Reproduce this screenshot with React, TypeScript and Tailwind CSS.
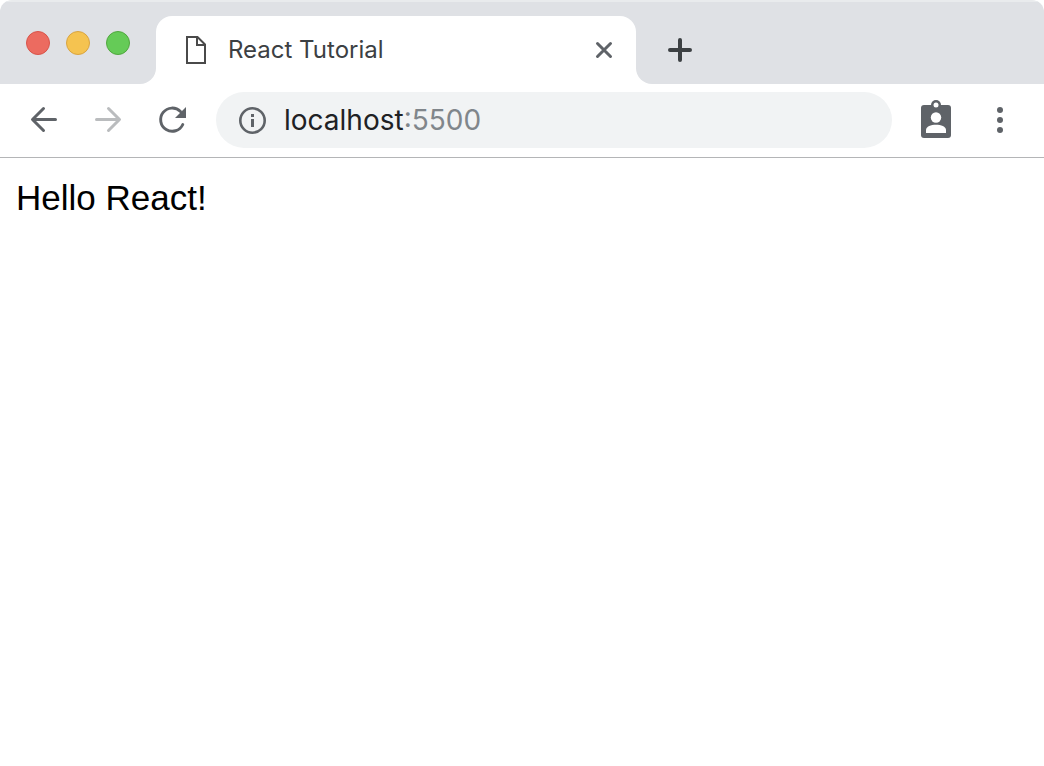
import { useState, type ReactNode } from 'react';

interface ToolbarButtonProps {
  label: string;
  disabled?: boolean;
  children: ReactNode;
}

function ToolbarButton({ label, disabled, children }: ToolbarButtonProps) {
  return (
    <button
      type="button"
      aria-label={label}
      disabled={disabled}
      className="flex h-14 w-14 shrink-0 items-center justify-center rounded-full text-[#5f6368] disabled:text-[#babcbe]"
    >
      {children}
    </button>
  );
}

function TrafficLights() {
  return (
    <div className="flex gap-4">
      <button type="button" aria-label="Close window" className="h-6 w-6 rounded-full border border-[#d8544a] bg-[#ec6b60]" />
      <button type="button" aria-label="Minimize window" className="h-6 w-6 rounded-full border border-[#d9a441] bg-[#f5c350]" />
      <button type="button" aria-label="Zoom window" className="h-6 w-6 rounded-full border border-[#51a73f] bg-[#65cb57]" />
    </div>
  );
}

function TabStrip() {
  return (
    <header className="flex h-21 overflow-hidden rounded-t-xl">
      <div className="flex w-39 shrink-0 items-center rounded-br-2xl border-t-2 border-[#e9ebed] bg-[#dfe1e5] pb-0 pl-6.5">
        <TrafficLights />
      </div>

      <div className="w-120 min-w-0 border-t-2 border-[#e9ebed] bg-[#dfe1e5] pt-3.5">
        <div className="flex h-full items-center rounded-t-2xl bg-white pr-4 pl-7">
          <svg width="24" height="32" viewBox="0 0 24 32" fill="none" stroke="#4a4a4a" strokeWidth="2" className="shrink-0" aria-hidden="true">
            <path d="M3 3h10.500l7.500 7.500V29H3z" />
            <path d="M13 3v8h8" />
          </svg>
          <h1 className="ml-5 flex-1 truncate font-['Inter',sans-serif] text-2xl text-[#3c4043]">React Tutorial</h1>
          <button type="button" aria-label="Close tab" className="flex h-8 w-8 shrink-0 items-center justify-center">
            <svg width="20" height="20" viewBox="0 0 20 20" fill="none" stroke="#5f6368" strokeWidth="3" strokeLinecap="round">
              <path d="M3.500 3.500l13 13M16.500 3.500l-13 13" />
            </svg>
          </button>
        </div>
      </div>

      <div className="flex-1 rounded-bl-2xl border-t-2 border-[#e9ebed] bg-[#dfe1e5] pt-7 pl-6">
        <button type="button" aria-label="New tab" className="flex h-10 w-10 items-center justify-center">
          <svg width="24" height="24" viewBox="0 0 24 24" fill="none" stroke="#3c4043" strokeWidth="4" strokeLinecap="round">
            <path d="M12 2v20M2 12h20" />
          </svg>
        </button>
      </div>
    </header>
  );
}

function AddressBar() {
  const [host, setHost] = useState('localhost');
  const [port, setPort] = useState(':5500');

  return (
    <div className="mx-2 flex h-14 min-w-0 flex-1 items-center rounded-full bg-[#f1f3f4] pl-5 font-['Inter',sans-serif] text-[28px]">
      <svg width="32" height="32" viewBox="0 0 32 32" className="mr-4 shrink-0" aria-hidden="true">
        <circle cx="16.500" cy="16.500" r="12.200" fill="none" stroke="#5f6368" strokeWidth="2.600" />
        <path d="M15 10h3v3h-3zM15 15h3v8h-3z" fill="#5f6368" />
      </svg>
      <input
        aria-label="Host"
        value={host}
        onChange={(e) => setHost(e.target.value)}
        className="field-sizing-content min-w-0 text-[#202124] outline-none"
      />
      <input
        aria-label="Port"
        value={port}
        onChange={(e) => setPort(e.target.value)}
        className="field-sizing-content min-w-0 text-[#80868b] outline-none"
      />
    </div>
  );
}

function Toolbar() {
  return (
    <nav className="flex items-center gap-2 border-b border-[#b4b5b7] px-4 pt-2 pb-[9px]">
      <ToolbarButton label="Back">
        <svg width="28" height="28" viewBox="0 0 28 28" fill="none" stroke="currentColor" strokeWidth="3" strokeLinecap="round" strokeLinejoin="round">
          <path d="M13.500 2.500L2.500 13.500l11 11M3 13.500h22.500" />
        </svg>
      </ToolbarButton>
      <ToolbarButton label="Forward" disabled>
        <svg width="28" height="28" viewBox="0 0 28 28" fill="none" stroke="currentColor" strokeWidth="3" strokeLinecap="round" strokeLinejoin="round">
          <path d="M14.500 2.500l11 11-11 11M25 13.500H2.500" />
        </svg>
      </ToolbarButton>
      <ToolbarButton label="Reload">
        <svg width="28" height="28" viewBox="0 0 28 28" fill="none">
          <path d="M22.500 5.500A11.600 11.600 0 1 0 24.800 18.500" stroke="currentColor" strokeWidth="2.900" strokeLinecap="round" />
          <path d="M28 1v11H17z" fill="currentColor" />
        </svg>
      </ToolbarButton>

      <AddressBar />

      <ToolbarButton label="Profile">
        <svg width="30" height="40" viewBox="0 0 30 40">
          <rect y="5" width="30" height="33" rx="3" fill="currentColor" />
          <circle cx="15" cy="5" r="5" fill="currentColor" />
          <circle cx="15" cy="5" r="2.500" fill="white" />
          <circle cx="15" cy="17.500" r="5.200" fill="white" />
          <path d="M5 33v-3c0-3.500 5-5.200 10-5.200s10 1.700 10 5.200v3z" fill="white" />
        </svg>
      </ToolbarButton>
      <ToolbarButton label="Menu">
        <svg width="6" height="26" viewBox="0 0 6 26" fill="currentColor">
          <circle cx="3" cy="3" r="3" />
          <circle cx="3" cy="13" r="3" />
          <circle cx="3" cy="23" r="3" />
        </svg>
      </ToolbarButton>
    </nav>
  );
}

export default function App() {
  return (
    <div className="min-h-screen bg-white">
      <TabStrip />
      <Toolbar />
      <main className="p-4 font-['Liberation_Sans',sans-serif] text-[35px] leading-12 text-black">
        <p>Hello React!</p>
      </main>
    </div>
  );
}
